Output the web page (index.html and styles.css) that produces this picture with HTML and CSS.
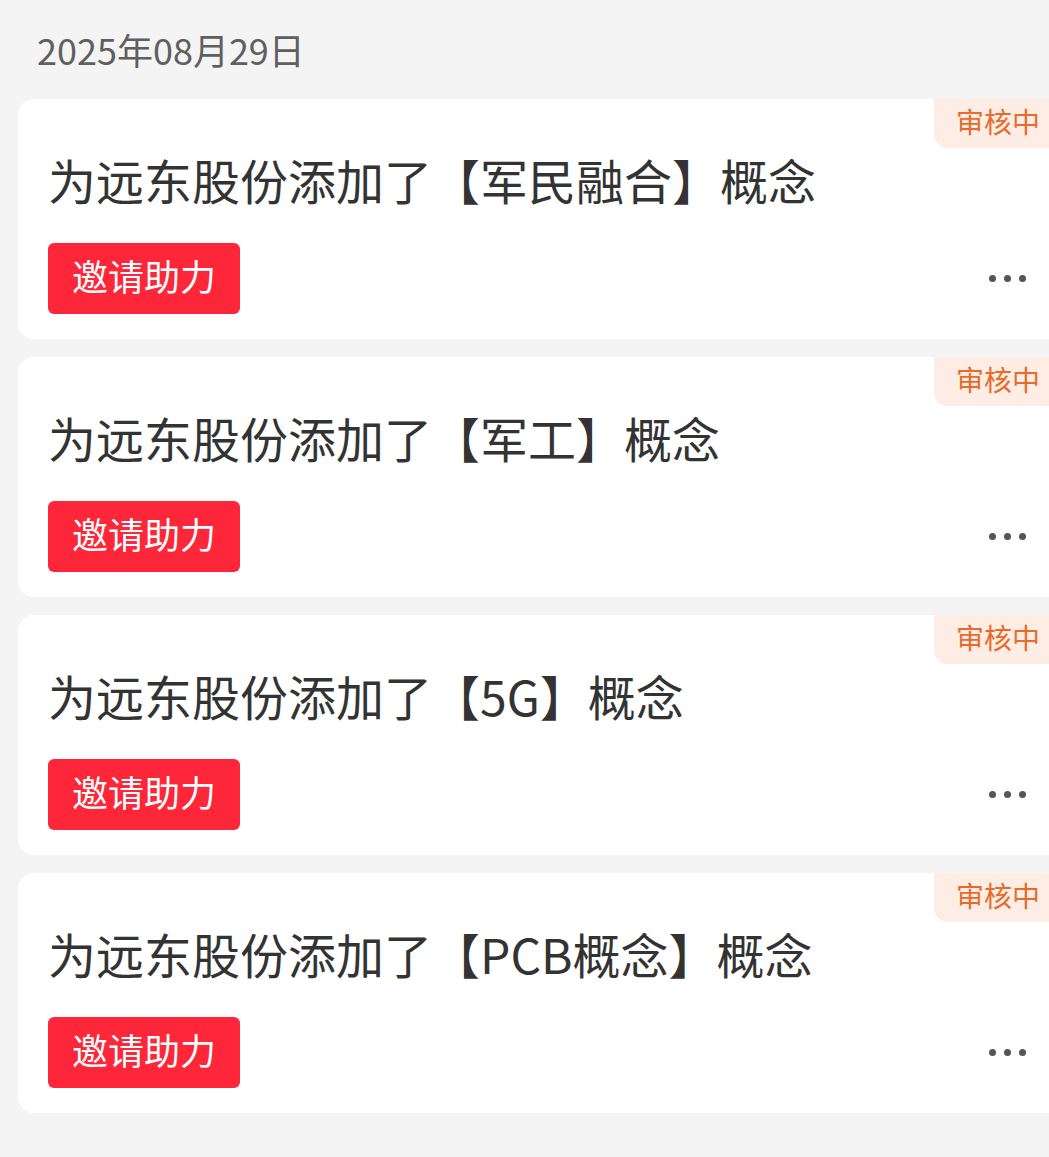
FILE: index.html
```html
<!DOCTYPE html>
<html lang="zh-CN">
<head>
<meta charset="utf-8">
<link rel="stylesheet" href="styles.css">
</head>
<body>
<div class="page">
  <div class="date">2025年08月29日</div>
  <div class="list">
    <div class="card">
      <div class="badge">审核中</div>
      <div class="title">为远东股份添加了【军民融合】概念</div>
      <div class="row">
        <div class="btn">邀请助力</div>
        <div class="more"><i></i><i></i><i></i></div>
      </div>
    </div>
    <div class="card">
      <div class="badge">审核中</div>
      <div class="title">为远东股份添加了【军工】概念</div>
      <div class="row">
        <div class="btn">邀请助力</div>
        <div class="more"><i></i><i></i><i></i></div>
      </div>
    </div>
    <div class="card">
      <div class="badge">审核中</div>
      <div class="title">为远东股份添加了【5G】概念</div>
      <div class="row">
        <div class="btn">邀请助力</div>
        <div class="more"><i></i><i></i><i></i></div>
      </div>
    </div>
    <div class="card">
      <div class="badge">审核中</div>
      <div class="title">为远东股份添加了【PCB概念】概念</div>
      <div class="row">
        <div class="btn">邀请助力</div>
        <div class="more"><i></i><i></i><i></i></div>
      </div>
    </div>
  </div>
</div>
</body>
</html>
```
FILE: styles.css
```css
html, body {
  margin: 0;
  padding: 0;
  background: #f4f4f4;
  overflow: hidden;
}
body {
  font-family: "Noto Sans CJK SC", "Noto Sans", sans-serif;
}
.page {
  padding-left: 18px;
  width: 1031px;
}
.date {
  padding: 24px 0 0 19px;
  height: 50px;
  line-height: 50px;
  margin-bottom: 25px;
  font-size: 36px;
  color: #5f5f5f;
}
.list {
  display: flex;
  flex-direction: column;
  gap: 18px;
}
.card {
  position: relative;
  box-sizing: border-box;
  height: 240px;
  background: #fff;
  border-radius: 16px 0 0 16px;
  padding: 48px 23px 0 30px;
}
.badge {
  position: absolute;
  top: 0;
  right: 0;
  box-sizing: border-box;
  height: 49px;
  line-height: 45px;
  padding: 0 9px 4px 22px;
  font-size: 28px;
  color: #e76c2c;
  background: #feede4;
  border-radius: 0 0 0 14px;
}
.title {
  font-size: 48px;
  line-height: 64px;
  color: #333;
  white-space: nowrap;
}
.row {
  margin-top: 32px;
  display: flex;
  align-items: center;
  justify-content: space-between;
}
.btn {
  box-sizing: border-box;
  height: 71px;
  line-height: 65px;
  padding: 0 24px 6px;
  font-size: 36px;
  color: #fff;
  background: #fe2639;
  border-radius: 6px;
}
.more {
  display: flex;
  gap: 8px;
}
.more i {
  display: block;
  width: 7px;
  height: 7px;
  border-radius: 50%;
  background: #555;
}
```
